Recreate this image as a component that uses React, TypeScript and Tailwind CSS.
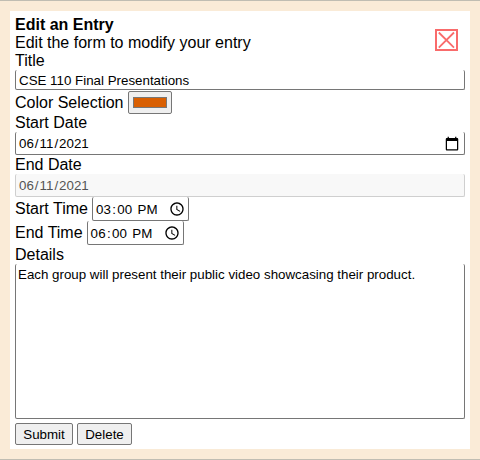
import React from "react";

const field =
  "block w-full bg-white border border-t-0 border-[#767676] rounded-[2px] text-[13.333px] text-black";

function CloseButton() {
  return (
    <button type="button" aria-label="Close" className="mt-[13px] mr-[7px] size-[23px]">
      <svg width="23" height="23" viewBox="0 0 23 23" fill="none" stroke="#f96b6b">
        <rect x="1" y="1" width="21" height="20" strokeWidth="2" />
        <path d="M3.8 3.5L19 18.7M19 3.5L3.8 18.7" strokeWidth="1.8" />
      </svg>
    </button>
  );
}

function TimeRow({ label, value }: { label: string; value: string }) {
  return (
    <div className="flex h-6 items-start gap-1">
      <label className="pt-[3px]">{label}</label>
      <input
        type="time"
        defaultValue={value}
        className="h-6 w-[97px] rounded-[2px] border border-t-0 border-[#767676] bg-white pt-px pr-0 pl-[2px] text-[13.333px] leading-[15px] tracking-[0.25px] [&::-webkit-calendar-picker-indicator]:m-0 [&::-webkit-calendar-picker-indicator]:size-[16px]"
      />
    </div>
  );
}

export default function App() {
  return (
    <div className="h-[460px] w-[480px] border-y border-[#c0bdb2] bg-[#faebd7] px-[10px] py-[10px] font-['Liberation_Sans',Arial,sans-serif] text-[16px] leading-[18px] text-black">
      <form className="flex h-[438px] flex-col bg-white px-[5px] pt-[5px]">
        <div className="flex h-9 items-start justify-between">
          <div>
            <h1 className="font-bold">Edit an Entry</h1>
            <p>Edit the form to modify your entry</p>
          </div>
          <CloseButton />
        </div>
        <label className="h-[18px]">Title</label>
        <input type="text" defaultValue="CSE 110 Final Presentations" className={`${field} h-5 px-[3px] pt-px`} />
        <div className="flex h-[23px] items-start gap-1 pt-px">
          <label className="pt-[3px]">Color Selection</label>
          <div className="h-[23px] w-[44px] rounded-[2px] border border-[#767676] bg-[#efefef] px-[4px] py-[5px]">
            <div className="h-[11px] w-[34px] border border-[#777] bg-[#d95f02]" />
          </div>
        </div>
        <label className="h-[19px] pt-px">Start Date</label>
        <input
          type="date"
          defaultValue="2021-06-11"
          className={`${field} h-[23px] pt-px pr-[2px] pl-[2px] [&::-webkit-calendar-picker-indicator]:size-[16px]`}
        />
        <label className="h-[19px] pt-px">End Date</label>
        <input
          type="date"
          disabled
          defaultValue="2021-06-11"
          className="block h-[23px] w-full rounded-[2px] border border-t-0 border-[#cfcfcf] bg-[#f8f8f8] px-[2px] pt-px text-[13.333px] text-[#545454]"
        />
        <TimeRow label="Start Time" value="15:00" />
        <TimeRow label="End Time" value="18:00" />
        <label className="h-[19px] pt-px">Details</label>
        <textarea
          defaultValue="Each group will present their public video showcasing their product."
          className={`${field} h-[155px] resize-none px-[2px] pt-[3px] leading-[15px]`}
        />
        <div className="mt-1 flex gap-1">
          <button type="submit" className="h-[22px] w-[58px] rounded-[2px] border border-[#767676] bg-[#efefef] pt-px text-[13.333px] leading-[20px]">
            Submit
          </button>
          <button type="button" className="h-[22px] w-[55px] rounded-[2px] border border-[#767676] bg-[#efefef] pt-px text-[13.333px] leading-[20px]">
            Delete
          </button>
        </div>
      </form>
    </div>
  );
}
